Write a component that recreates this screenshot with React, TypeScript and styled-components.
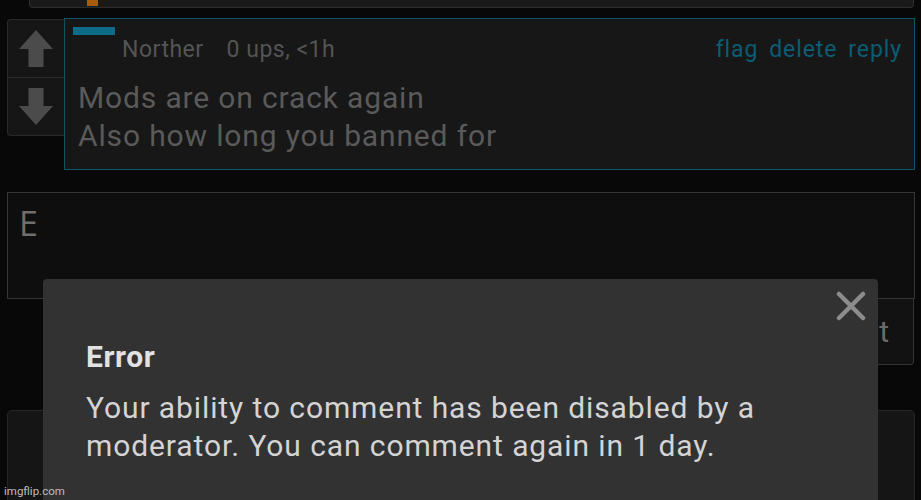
import styled, { createGlobalStyle } from "styled-components";

const GlobalStyle = createGlobalStyle`
  html, body {
    margin: 0;
    padding: 0;
    background: #080808;
    overflow: hidden;
  }
  * {
    box-sizing: border-box;
  }
`;

function VoteArrow({ down }: { down?: boolean }) {
  return (
    <svg width="34" height="37" viewBox="0 0 34 37" style={{ transform: down ? "rotate(180deg)" : undefined }}>
      <polygon points="17,0 34,19 24.5,19 24.5,37 9.5,37 9.5,19 0,19" fill="#4b4b4b" />
    </svg>
  );
}

function CloseIcon() {
  return (
    <svg width="30" height="30" viewBox="0 0 30 30">
      <path d="M3 3 L27 27 M27 3 L3 27" stroke="#8c8c8c" strokeWidth="4.5" strokeLinecap="round" />
    </svg>
  );
}

function App() {
  return (
    <Page>
      <GlobalStyle />
      <TopStub>
        <OrangeMark />
      </TopStub>

      <CommentRow>
        <VoteBox>
          <VoteButton>
            <VoteArrow />
          </VoteButton>
          <VoteButton $bottom>
            <VoteArrow down />
          </VoteButton>
        </VoteBox>

        <CommentBox>
          <TealBar />
          <MetaRow>
            <Author>Norther</Author>
            <MetaInfo>0 ups, &lt;1h</MetaInfo>
            <Actions>
              <span>flag</span>
              <span>delete</span>
              <span>reply</span>
            </Actions>
          </MetaRow>
          <CommentText>
            Mods are on crack again
            <br />
            Also how long you banned for
          </CommentText>
        </CommentBox>
      </CommentRow>

      <TextArea>E</TextArea>
      <SubmitRow>
        <SubmitButton>Submit</SubmitButton>
      </SubmitRow>

      <NextBox />

      <Dialog>
        <CloseButton>
          <CloseIcon />
        </CloseButton>
        <DialogTitle>Error</DialogTitle>
        <DialogText>
          Your ability to comment has been disabled by a
          <br />
          moderator. You can comment again in 1 day.
        </DialogText>
      </Dialog>

      <Watermark>imgflip.com</Watermark>
    </Page>
  );
}

const Page = styled.div`
  position: relative;
  width: 921px;
  height: 500px;
  overflow: hidden;
  padding: 0 6px 0 7px;
  display: flex;
  flex-direction: column;
  font-family: Roboto, "Liberation Sans", sans-serif;
  background: #080808;

  & > * {
    flex-shrink: 0;
  }
`;

const TopStub = styled.div`
  position: relative;
  height: 8px;
  margin-left: 22px;
  margin-right: 1px;
  background: #1a1a1a;
  border: 1px solid #2e2e2e;
  border-top: none;
  border-radius: 0 0 4px 4px;
`;

const OrangeMark = styled.div`
  position: absolute;
  left: 57px;
  top: 0;
  width: 11px;
  height: 6px;
  background: #a85d0c;
`;

const CommentRow = styled.div`
  display: flex;
  align-items: flex-start;
  margin-top: 10px;
`;

const VoteBox = styled.div`
  width: 58px;
  height: 117px;
  margin-top: 1px;
  display: flex;
  flex-direction: column;
  background: #161616;
  border: 1px solid #2a2a2a;
  border-right: none;
  border-radius: 4px 0 0 4px;
`;

const VoteButton = styled.div<{ $bottom?: boolean }>`
  flex: 1;
  display: flex;
  align-items: center;
  justify-content: center;
  padding-right: 2px;
  border-top: ${(p) => (p.$bottom ? "1px solid #2a2a2a" : "none")};
`;

const CommentBox = styled.div`
  flex: 1;
  height: 152px;
  margin-left: -1px;
  background: #171717;
  border: 1px solid #0d5468;
  padding: 8px 12px 0 8px;
`;

const TealBar = styled.div`
  width: 42px;
  height: 8px;
  background: #0d6c87;
`;

const MetaRow = styled.div`
  display: flex;
  align-items: baseline;
  padding-left: 49px;
  font-size: 23px;
  letter-spacing: 0.5px;
  line-height: 30px;
`;

const Author = styled.span`
  color: #545454;
`;

const MetaInfo = styled.span`
  color: #545454;
  margin-left: 23px;
`;

const Actions = styled.div`
  margin-left: auto;
  display: flex;
  gap: 11px;
  color: #0b5d74;
  letter-spacing: 0.9px;
`;

const CommentText = styled.div`
  margin-top: 14px;
  padding-left: 5px;
  font-size: 30px;
  letter-spacing: 0.85px;
  line-height: 38px;
  color: #5a5a5a;
`;

const TextArea = styled.div`
  margin-top: 22px;
  height: 107px;
  background: #0e0e0e;
  border: 1px solid #353535;
  padding: 10px 11px;
  font-family: "Open Sans", Roboto, sans-serif;
  font-size: 34px;
  line-height: 40px;
  color: #6e6e6e;
`;

const SubmitRow = styled.div`
  display: flex;
  justify-content: flex-end;
`;

const SubmitButton = styled.div`
  width: 130px;
  height: 66px;
  margin-right: 1px;
  display: flex;
  align-items: center;
  justify-content: flex-end;
  padding-right: 24px;
  background: #121212;
  border: 1px solid #333333;
  border-top: none;
  border-radius: 0 0 4px 4px;
  font-size: 30px;
  color: #6a6a6a;
`;

const NextBox = styled.div`
  margin-top: 45px;
  height: 120px;
  background: #151515;
  border: 1px solid #262626;
  border-radius: 5px 5px 0 0;
`;

const Dialog = styled.div`
  position: absolute;
  left: 43px;
  top: 279px;
  width: 835px;
  height: 260px;
  background: #323232;
  border-radius: 4px;
  padding: 61px 40px 0 43px;
`;

const CloseButton = styled.div`
  position: absolute;
  right: 12px;
  top: 12px;
  width: 30px;
  height: 30px;
  display: flex;
`;

const DialogTitle = styled.div`
  font-size: 30px;
  font-weight: 700;
  letter-spacing: 0.6px;
  line-height: 34px;
  color: #e2e2e2;
`;

const DialogText = styled.div`
  margin-top: 15px;
  font-size: 30px;
  letter-spacing: 0.9px;
  line-height: 38px;
  color: #d4d4d4;
`;

const Watermark = styled.div`
  position: absolute;
  left: 4px;
  bottom: 2px;
  font-size: 11.5px;
  color: #bdbdbd;
  font-family: Roboto, "Liberation Sans", sans-serif;
`;

export default App;
